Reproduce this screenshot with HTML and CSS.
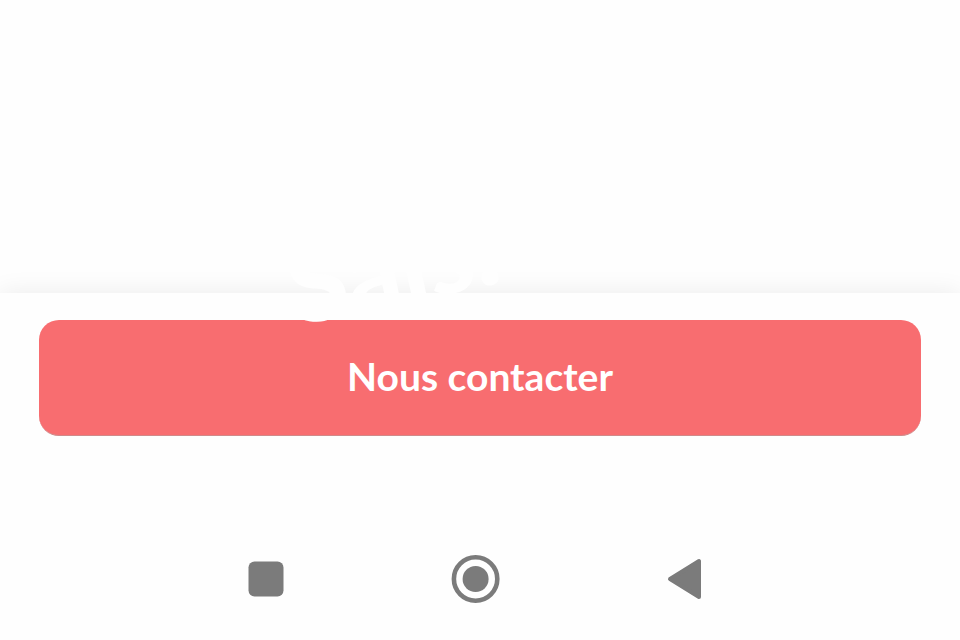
FILE: index.html
```
<!DOCTYPE html>
<html lang="fr">
<head>
    <meta charset="UTF-8">
    <meta name="viewport" content="width=device-width, initial-scale=1.0">
    <title>Nous contacter</title>
    <link rel="stylesheet" href="styles.css">
</head>
<body>
    <main class="content"></main>
    <div class="bottom-bar">
        <span class="watermark" aria-hidden="true">Sais.</span>
        <button class="contact-button" type="button">Nous contacter</button>
    </div>
    <nav class="system-nav">
        <button class="nav-button" type="button" aria-label="Applications récentes">
            <svg width="50" height="50" viewBox="0 0 50 50">
                <rect x="7.5" y="7.5" width="35" height="35" rx="6" />
            </svg>
        </button>
        <button class="nav-button" type="button" aria-label="Accueil">
            <svg width="50" height="50" viewBox="0 0 50 50">
                <circle class="ring" cx="24.6" cy="25" r="21.7" />
                <circle cx="24.6" cy="25" r="13" />
            </svg>
        </button>
        <button class="nav-button" type="button" aria-label="Retour">
            <svg width="50" height="50" viewBox="0 0 50 50">
                <path class="arrow" d="M9 25 L38 7 V43 Z" />
            </svg>
        </button>
    </nav>
</body>
</html>
```
FILE: styles.css
```
body {
    font-family: Lato, sans-serif;
    margin: 0;
    min-height: 100vh;
    display: flex;
    flex-direction: column;
    background: #fefefe;
    overflow: hidden;
}
.content {
    flex: 1;
}
.bottom-bar {
    position: relative;
    padding: 27px 39px 118px;
    background: #fefefe;
    box-shadow: 0 0 24px rgba(0, 0, 0, 0.08);
}
.contact-button {
    display: block;
    width: 100%;
    padding: 32px 20px 35px;
    border: 0;
    border-bottom: 1px solid #d08a8a;
    border-radius: 20px;
    background: #f86d70;
    color: white;
    font-family: Lato, sans-serif;
    font-size: 39px;
    font-weight: 700;
    line-height: 48px;
}
/* white lettering laid over the edge of the bar */
.watermark {
    position: absolute;
    left: 286px;
    top: -79px;
    color: #fefefe;
    font-size: 106px;
    font-weight: 900;
    line-height: 100px;
    transform: rotate(-12deg);
    pointer-events: none;
}
.system-nav {
    position: relative;
    display: flex;
    justify-content: center;
    gap: 160px;
    padding: 0 8px 36px 0;
    background: #fefefe;
}
.nav-button {
    display: block;
    padding: 0;
    border: 0;
    background: none;
}
.nav-button svg {
    display: block;
    fill: #7b7b7b;
}
.nav-button .ring {
    fill: none;
    stroke: #7b7b7b;
    stroke-width: 4.6;
}
.nav-button .arrow {
    stroke: #7b7b7b;
    stroke-width: 4;
    stroke-linejoin: round;
}
```
